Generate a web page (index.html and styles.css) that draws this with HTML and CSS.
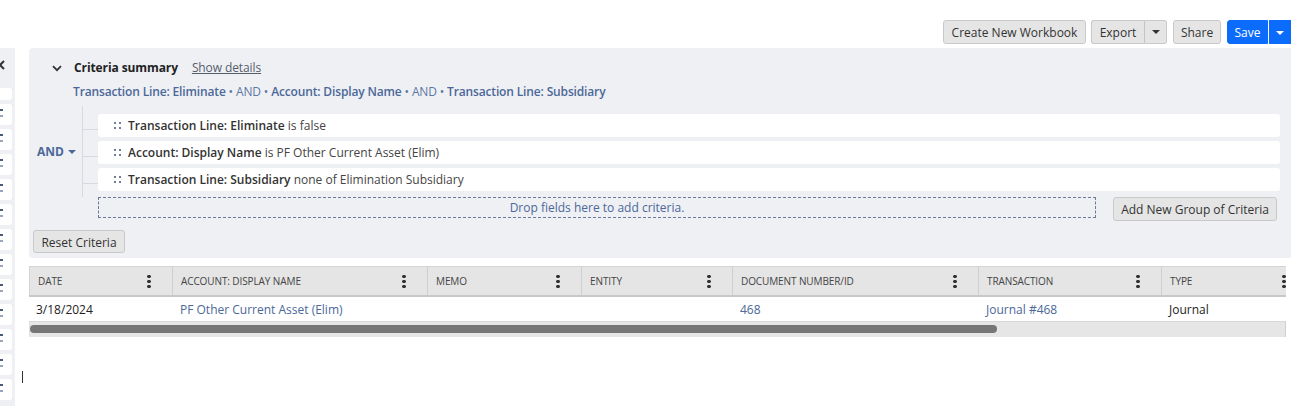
FILE: index.html
```html
<!DOCTYPE html>
<html>
<head>
<meta charset="utf-8">
<link rel="stylesheet" href="styles.css">
</head>
<body>
<div class="toolbar">
  <button class="btn create">Create New Workbook</button>
  <div class="split">
    <button class="btn split-main">Export</button>
    <button class="btn split-caret"><span class="caret dark"></span></button>
  </div>
  <button class="btn share">Share</button>
  <div class="split primary">
    <button class="btn blue">Save</button>
    <button class="btn blue caret-btn"><span class="caret white"></span></button>
  </div>
</div>
<div class="layout">
  <aside class="sidebar">
    <svg class="side-close" width="8" height="10" viewBox="0 0 8 10"><path d="M-4 1 L4 9 M4 1 L-4 9" stroke="#333" stroke-width="2"/></svg>
    <div class="side-card short"></div>
    <div class="side-card"><i></i></div>
    <div class="side-card"><i></i></div>
    <div class="side-card"><i></i></div>
    <div class="side-card"><i></i></div>
    <div class="side-card"><i></i></div>
    <div class="side-card"><i></i></div>
    <div class="side-card"><i></i></div>
    <div class="side-card"><i></i></div>
    <div class="side-card"><i></i></div>
    <div class="side-card"><i></i></div>
    <div class="side-card"><i></i></div>
    <div class="side-card"><i></i></div>
  </aside>
  <main class="main">
    <section class="panel">
      <div class="summary-head">
        <svg class="chev" width="10" height="7" viewBox="0 0 10 7"><path d="M1 1.2 L5 5.2 L9 1.2" fill="none" stroke="#333" stroke-width="1.8"/></svg>
        <span class="summary-title">Criteria summary</span>
        <a class="show-details">Show details</a>
      </div>
      <div class="summary-line">
        <span class="f">Transaction Line: Eliminate</span><span class="sep"> • AND • </span><span class="f">Account: Display Name</span><span class="sep"> • AND • </span><span class="f">Transaction Line: Subsidiary</span>
      </div>
      <div class="group">
        <div class="and-label">AND <span class="caret blue-caret"></span></div>
        <div class="tree">
          <div class="crit"><span class="grip"></span><b>Transaction Line: Eliminate</b>&nbsp;is false</div>
          <div class="crit"><span class="grip"></span><b>Account: Display Name</b>&nbsp;is PF Other Current Asset (Elim)</div>
          <div class="crit"><span class="grip"></span><b>Transaction Line: Subsidiary</b>&nbsp;none of Elimination Subsidiary</div>
        </div>
      </div>
      <div class="drop-row">
        <div class="dropzone">Drop fields here to add criteria.</div>
        <button class="btn add-group">Add New Group of Criteria</button>
      </div>
      <button class="btn reset">Reset Criteria</button>
    </section>
    <section class="table">
      <div class="thead">
        <div class="th c1">DATE<span class="kebab"></span></div>
        <div class="th c2">ACCOUNT: DISPLAY NAME<span class="kebab"></span></div>
        <div class="th c3">MEMO<span class="kebab"></span></div>
        <div class="th c4">ENTITY<span class="kebab"></span></div>
        <div class="th c5">DOCUMENT NUMBER/ID<span class="kebab"></span></div>
        <div class="th c6">TRANSACTION<span class="kebab"></span></div>
        <div class="th c7">TYPE<span class="kebab"></span></div>
      </div>
      <div class="trow">
        <div class="td c1">3/18/2024</div>
        <div class="td c2 link">PF Other Current Asset (Elim)</div>
        <div class="td c3"></div>
        <div class="td c4"></div>
        <div class="td c5 link">468</div>
        <div class="td c6 link">Journal #468</div>
        <div class="td c7">Journal</div>
      </div>
      <div class="scroll"><div class="thumb"></div></div>
    </section>
    <div class="cursor"></div>
  </main>
</div>
</body>
</html>
```

FILE: styles.css
```css
* { box-sizing: border-box; }
html, body { margin: 0; padding: 0; }
body {
  width: 1291px;
  height: 406px;
  overflow: hidden;
  background: #fff;
  font-family: "Open Sans", "Liberation Sans", sans-serif;
  font-size: 12px;
  color: #333;
}
button { font-family: inherit; }

.toolbar {
  height: 48px;
  display: flex;
  justify-content: flex-end;
  align-items: flex-start;
  padding-top: 20px;
  gap: 6px;
}
.btn {
  height: 24px;
  padding: 0 8px;
  background: #e5e5e5;
  border: 1px solid #c9c9c9;
  border-radius: 3px;
  font-size: 12px;
  color: #333;
  line-height: 22px;
  padding-top: 1px;
  cursor: pointer;
}
.btn.create { width: 143px; padding-left: 0; padding-right: 0; margin-right: -1px; }
.btn.share { width: 48px; padding-left: 0; padding-right: 0; }
.split { display: flex; }
.split-main { border-radius: 3px 0 0 3px; border-right: 1px solid #c4c4c4; width: 54px; padding-left: 0; padding-right: 0; }
.split-caret { border-radius: 0 3px 3px 0; border-left: none; width: 22px; padding: 0; display: flex; align-items: center; justify-content: center; }
.primary { gap: 1px; }
.btn.blue {
  background: #0b6cfb;
  border-color: #0b6cfb;
  color: #fff;
  border-radius: 3px 0 0 3px;
  width: 41px;
  padding: 1px 0 0;
}
.btn.caret-btn {
  width: 22px;
  border-radius: 0;
  display: flex; align-items: center; justify-content: center;
}
.caret {
  display: inline-block;
  width: 0; height: 0;
  border-left: 4px solid transparent;
  border-right: 4px solid transparent;
  border-top: 4px solid #333;
}
.caret.white { border-top-color: #fff; }

.layout { display: flex; height: 358px; }
.sidebar {
  width: 15px;
  background: #eff0f4;
  overflow: hidden;
  display: flex;
  flex-direction: column;
  gap: 4px;
  flex-shrink: 0;
}
.side-close {
  display: block;
  margin-top: 12px;
  margin-bottom: 18px;
  flex-shrink: 0;
}
.side-card {
  margin-left: -10px;
  width: 22px;
  height: 21px;
  background: #fff;
  border-radius: 3px;
  position: relative;
  flex-shrink: 0;
}
.side-card.short { height: 12px; margin-top: -4px; }
.side-card i {
  position: absolute;
  left: 10px; top: 5px;
  width: 3px; height: 2px;
  background: #4a5a78;
  box-shadow: 0 6px 0 0 #9aa6bd;
}

.main { flex: 1; padding-left: 14px; }

.panel {
  background: #eff0f4;
  height: 210px;
  border-radius: 4px 0 0 4px;
  padding: 10px 11px 0 0;
}
.summary-head {
  display: flex;
  align-items: center;
  height: 18px;
  padding-left: 23px;
}
.chev { margin-right: 12px; margin-top: 2px; }
.summary-title { font-weight: 700; color: #222; font-size: 12px; letter-spacing: -0.1px; }
.show-details {
  margin-left: 14px;
  color: #555e6e;
  text-decoration: underline;
  font-size: 12px;
  letter-spacing: -0.1px;
}
.summary-line {
  padding-left: 44px;
  margin-top: 7px;
  height: 18px;
  line-height: 18px;
  color: #4b6899;
  letter-spacing: -0.15px;
}
.summary-line .f { font-weight: 600; }
.summary-line .sep { color: #5d77a3; }

.group {
  display: flex;
  align-items: center;
  margin-top: 5px;
}
.and-label {
  width: 53px;
  padding-left: 8px;
  font-weight: 700;
  font-size: 12px;
  color: #4b6899;
  display: flex; align-items: center; gap: 4px;
}
.caret.blue-caret { border-top-color: #4b6899; }
.tree {
  flex: 1;
  border-left: 1px solid #d6d9e0;
  padding: 8px 0 6px 15px;
  display: flex;
  flex-direction: column;
  gap: 4px;
}
.crit {
  position: relative;
  height: 23px;
  background: #fff;
  border-radius: 3px;
  display: flex;
  align-items: center;
  padding-left: 16px;
  color: #444;
}
.crit::before {
  content: "";
  position: absolute;
  left: -16px; top: 15px;
  width: 16px; height: 1px;
  background: #d6d9e0;
}
.crit b { font-weight: 600; color: #333; }
.grip {
  width: 7px; height: 7px;
  margin-right: 7px;
  background:
    linear-gradient(#6f7d98, #6f7d98) 0 0 / 2px 2px no-repeat,
    linear-gradient(#6f7d98, #6f7d98) 5px 0 / 2px 2px no-repeat,
    linear-gradient(#6f7d98, #6f7d98) 0 5px / 2px 2px no-repeat,
    linear-gradient(#6f7d98, #6f7d98) 5px 5px / 2px 2px no-repeat;
}
.drop-row {
  display: flex;
  align-items: flex-start;
  padding-left: 69px;
}
.dropzone {
  flex: 1;
  height: 21px;
  border: 1px dashed #6a7a98;
  margin-right: 17px;
  text-align: center;
  line-height: 19px;
  color: #4b6899;
  font-size: 12px;
}
.add-group { width: 164px; margin-right: 3px; padding: 1px 0 0; }
.reset {
  display: block;
  margin: 9px 0 0 4px;
  width: 92px;
  padding: 1px 0 0;
  height: 23px;
}

.table {
  margin-top: 8px;
  width: 1257px;
  overflow: hidden;
}
.thead, .trow { display: flex; width: 1300px; }
.thead {
  height: 31px;
  background: #e5e5e5;
  border-top: 1px solid #d4d4d4;
  border-bottom: 2px solid #c9c9c9;
}
.th {
  position: relative;
  height: 100%;
  display: flex;
  align-items: center;
  padding-left: 8px;
  font-size: 10px;
  color: #444;
  border-left: 1px solid #cfcfcf;
  letter-spacing: -0.1px;
}
.th.c1 { border-left: 1px solid #d4d4d4; }
.kebab {
  position: absolute;
  right: 21px; top: 7px;
  width: 4px; height: 15px;
  background: radial-gradient(circle, #333 1.7px, transparent 1.9px) 0 0 / 4px 5px;
}
.c1 { width: 143px; }
.c2 { width: 255px; }
.c3 { width: 154px; }
.c4 { width: 151px; }
.c5 { width: 246px; }
.c6 { width: 183px; }
.c7 { width: 146px; }
.trow {
  height: 25px;
  border-bottom: 1px solid #d8d8d8;
}
.td {
  padding-left: 8px;
  line-height: 25px;
  font-size: 12px;
  color: #222;
}
.td.link { color: #4b6899; }
.c1.td { padding-left: 7px; }
.scroll {
  height: 15px;
  background: #e6e6e6;
  border-right: 1px solid #cfcfcf;
  border-left: 1px solid #e0e0e0;
  padding-top: 3px;
}
.thumb {
  width: 967px;
  height: 8px;
  background: #767676;
  border-radius: 4px;
}
.cursor {
  margin: 34px 0 0 -7px;
  width: 1px;
  height: 12px;
  background: #333;
}
```
